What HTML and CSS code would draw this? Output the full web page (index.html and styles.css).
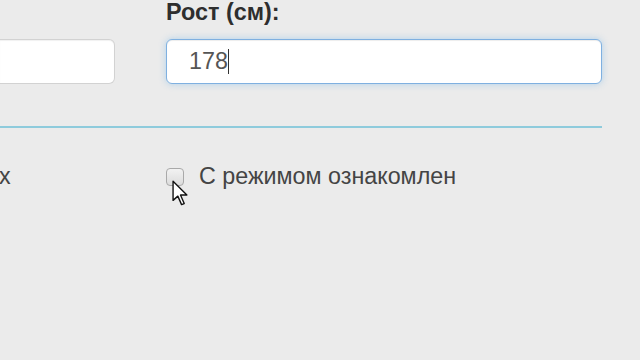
FILE: index.html
```html
<!DOCTYPE html>
<html lang="ru">
<head>
<meta charset="utf-8">
<title>Форма</title>
<link rel="stylesheet" href="styles.css">
</head>
<body>
<div class="page">
  <div class="row fields">
    <div class="col">
      <div class="label">&nbsp;</div>
      <div class="input"></div>
    </div>
    <div class="col">
      <div class="label">Рост (см):</div>
      <div class="input focus"><span class="value">178</span><span class="caret"></span></div>
    </div>
  </div>
  <div class="divider"></div>
  <div class="row checks">
    <div class="col left-text">х</div>
    <div class="col check-row">
      <span class="checkbox"></span>
      <span class="check-label">С режимом ознакомлен</span>
    </div>
  </div>
  <svg class="pointer" width="17" height="28" viewBox="0 0 16 26" xmlns="http://www.w3.org/2000/svg">
    <path d="M1 1 L1 19 L5.5 15 L9 23 L11.5 22 L8 14 L14 14 Z" fill="#fff" stroke="#111" stroke-width="1.3" stroke-linejoin="round"/>
  </svg>
</div>
</body>
</html>
```

FILE: styles.css
```css
html, body {
  margin: 0;
  padding: 0;
  background: #ebebeb;
  overflow: hidden;
}

body {
  width: 640px;
  height: 360px;
  font-family: "Liberation Sans", Arial, sans-serif;
  color: #333;
}

.page {
  position: relative;
  width: 602px;
  padding-top: 0;
  margin-top: -1px;
}

.row {
  display: grid;
  grid-template-columns: 115px 436px;
  column-gap: 51px;
}

.label {
  font-size: 23.4px;
  font-weight: bold;
  line-height: 26px;
  color: #2e2e2e;
  margin-bottom: 14px;
  white-space: nowrap;
}

.input {
  box-sizing: border-box;
  height: 45px;
  background: #fff;
  border: 1.5px solid #d2d2d2;
  border-radius: 6px;
  box-shadow: inset 0 1px 1px rgba(0, 0, 0, 0.06);
  display: flex;
  align-items: center;
  padding-left: 22px;
  font-size: 23.3px;
  color: #555;
}

.col:first-child .input {
  border-left: none;
  border-radius: 0 6px 6px 0;
}

.input.focus {
  border-color: #7fb0e0;
  box-shadow: inset 0 1px 1px rgba(0, 0, 0, 0.075), 0 0 7px rgba(102, 175, 233, 0.45);
}

.value {
  line-height: 26px;
  position: relative;
  top: -1px;
}

.caret {
  display: inline-block;
  width: 0;
  height: 25px;
  border-left: 1.5px solid #333;
  margin-left: 0;
}

.divider {
  margin-top: 42px;
  height: 2px;
  background: #8ecbdc;
}

.checks {
  margin-top: 35px;
  font-size: 23.3px;
  line-height: 26px;
  color: #444;
}

.left-text {
  margin-left: -1px;
}

.check-row {
  display: flex;
  align-items: center;
}

.checkbox {
  box-sizing: border-box;
  width: 18px;
  height: 18px;
  border: 1.5px solid #a9a9a9;
  border-radius: 4px;
  background: linear-gradient(#f2f2f2, #dcdcdc);
  margin-right: 15px;
  margin-top: 1px;
}

.check-label {
  white-space: nowrap;
}

.pointer {
  position: absolute;
  left: 172px;
  top: 181px;
}
```
